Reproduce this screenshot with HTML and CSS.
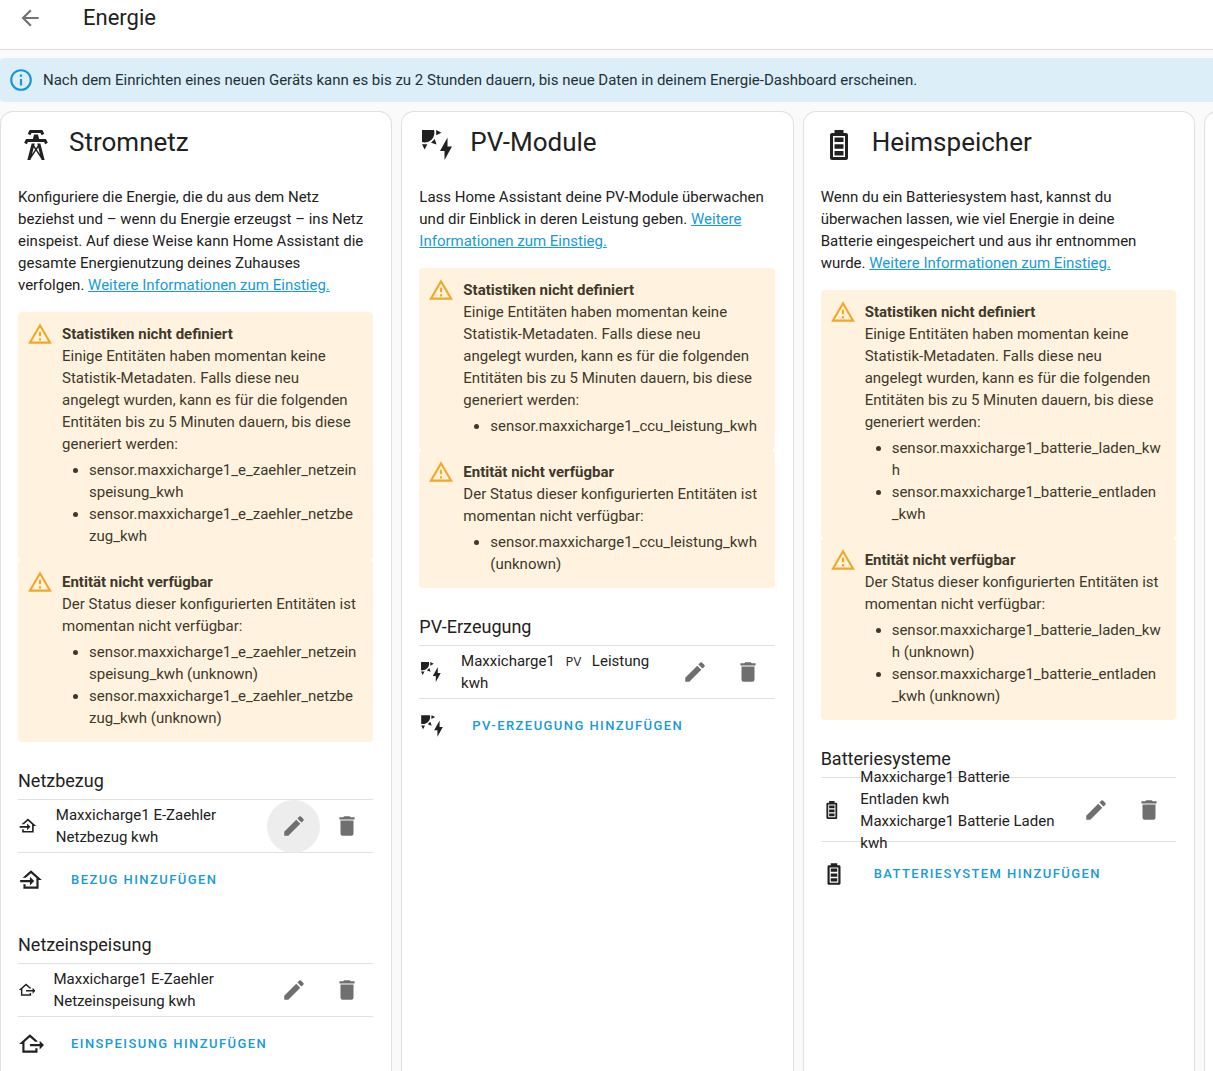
FILE: index.html
```html
<!DOCTYPE html>
<html lang="de">
<head>
<meta charset="utf-8">
<title>Energie</title>
<meta name="viewport" content="width=device-width, initial-scale=1">
<link rel="stylesheet" href="styles.css">
</head>
<body>
<svg class="sprite" aria-hidden="true">
  <symbol id="tower" viewBox="0 0 24 24"><path d="M8.28,5.45L6.5,4.55L7.76,2H16.23L17.5,4.55L15.72,5.44L15,4H9L8.28,5.45M18.62,8H14.09L13.3,5H10.7L9.91,8H5.38L4.1,10.55L5.89,11.44L6.62,10H17.38L18.1,11.45L19.89,10.56L18.62,8M17.77,22H15.7L15.46,21.1L12,15.9L8.53,21.1L8.3,22H6.23L9.12,11H11.19L10.83,12.35L12,14.1L13.16,12.35L12.81,11H14.88L17.77,22M11.4,15L10.5,13.65L9.32,18.13L11.4,15M14.68,18.12L13.5,13.64L12.6,15L14.68,18.12Z"/></symbol>
  <symbol id="solar" viewBox="0 0 24 24"><path d="M11.45,2V5.55L15,3.77L11.45,2M10.45,8L8,10.46L11.75,11.71L10.45,8M2,11.45L3.77,15L5.55,11.45H2M10,2H2V10C2.57,10.17 3.17,10.25 3.77,10.25C7.35,10.26 10.26,7.35 10.27,3.75C10.26,3.16 10.17,2.57 10,2M17,22V16H14L19,7V13H22L17,22Z"/></symbol>
  <symbol id="battery" viewBox="0 0 24 24"><path d="M16,20H8V6H16M16.67,4H15V2H9V4H7.33A1.33,1.33 0 0,0 6,5.33V20.67C6,21.4 6.6,22 7.33,22H16.67A1.33,1.33 0 0,0 18,20.67V5.33C18,4.6 17.4,4 16.67,4M15,16H9V19H15V16M15,7H9V10H15V7M15,11.5H9V14.5H15V11.5Z"/></symbol>
  <symbol id="import" viewBox="0 0 24 24"><path d="M15 13L11 17V14H2V12H11V9L15 13M5 20V16H7V18H17V10.19L12 5.69L7.21 10H4.22L12 3L22 12H19V20H5Z"/></symbol>
  <symbol id="export" viewBox="0 0 24 24"><path d="M24 13L20 17V14H11V12H20V9L24 13M4 20V12H1L11 3L18 9.3V10H15.79L11 5.69L6 10.19V18H16V16H18V20H4Z"/></symbol>
  <symbol id="pencil" viewBox="0 0 24 24"><path d="M20.71,7.04C21.1,6.65 21.1,6 20.71,5.63L18.37,3.29C18,2.9 17.35,2.9 16.96,3.29L15.12,5.12L18.87,8.87M3,17.25V21H6.75L17.81,9.93L14.06,6.18L3,17.25Z"/></symbol>
  <symbol id="trash" viewBox="0 0 24 24"><path d="M19,4H15.5L14.5,3H9.5L8.5,4H5V6H19M6,19A2,2 0 0,0 8,21H16A2,2 0 0,0 18,19V7H6V19Z"/></symbol>
  <symbol id="back" viewBox="0 0 24 24"><path d="M20,11V13H8L13.5,18.5L12.08,19.92L4.16,12L12.08,4.08L13.5,5.5L8,11H20Z"/></symbol>
  <symbol id="warning" viewBox="0 0 24 24"><path d="M12,2L1,21H23M12,6L19.53,19H4.47M11,10V14H13V10M11,16V18H13V16"/></symbol>
  <symbol id="info" viewBox="0 0 24 24"><path d="M11,9H13V7H11M12,20C7.59,20 4,16.41 4,12C4,7.59 7.59,4 12,4C16.41,4 20,7.59 20,12C20,16.41 16.41,20 12,20M12,2A10,10 0 0,0 2,12A10,10 0 0,0 12,22A10,10 0 0,0 22,12A10,10 0 0,0 12,2M11,17H13V11H11V17Z"/></symbol>
</svg>

<header class="toolbar">
  <button class="back" type="button" aria-label="Zurück"><svg class="icon"><use href="#back"/></svg></button>
  <h1 class="toolbar-title">Energie</h1>
</header>

<div class="notice" role="status">
  <svg class="icon"><use href="#info"/></svg>
  <span>Nach dem Einrichten eines neuen Geräts kann es bis zu 2 Stunden dauern, bis neue Daten in deinem Energie-Dashboard erscheinen.</span>
</div>

<main class="cards">
  <section class="card">
    <h2 class="card-title"><svg class="icon-large"><use href="#tower"/></svg>Stromnetz</h2>
    <p class="intro">Konfiguriere die Energie, die du aus dem Netz beziehst und – wenn du Energie erzeugst – ins Netz einspeist. Auf diese Weise kann Home Assistant die gesamte Energienutzung deines Zuhauses verfolgen. <a href="#">Weitere Informationen zum Einstieg.</a></p>
    <div class="alert" role="alert">
      <svg class="icon"><use href="#warning"/></svg>
      <div class="alert-body">
        <strong class="alert-title">Statistiken nicht definiert</strong>
        Einige Entitäten haben momentan keine Statistik-Metadaten. Falls diese neu angelegt wurden, kann es für die folgenden Entitäten bis zu 5 Minuten dauern, bis diese generiert werden:
        <ul><li>sensor.maxxicharge1_e_zaehler_netzeinspeisung_kwh</li><li>sensor.maxxicharge1_e_zaehler_netzbezug_kwh</li></ul>
      </div>
    </div>
    <div class="alert" role="alert">
      <svg class="icon"><use href="#warning"/></svg>
      <div class="alert-body">
        <strong class="alert-title">Entität nicht verfügbar</strong>
        Der Status dieser konfigurierten Entitäten ist momentan nicht verfügbar:
        <ul><li>sensor.maxxicharge1_e_zaehler_netzeinspeisung_kwh (unknown)</li><li>sensor.maxxicharge1_e_zaehler_netzbezug_kwh (unknown)</li></ul>
      </div>
    </div>
    <h3 class="group-title">Netzbezug</h3>
    <div class="row">
      <svg class="icon"><use href="#import"/></svg>
      <span class="content">Maxxicharge1 E-Zaehler Netzbezug kwh</span>
      <button class="icon-button active" type="button" aria-label="Bearbeiten"><svg class="icon"><use href="#pencil"/></svg></button>
      <button class="icon-button" type="button" aria-label="Löschen"><svg class="icon"><use href="#trash"/></svg></button>
    </div>
    <div class="row add">
      <svg class="icon"><use href="#import"/></svg>
      <button class="text-button" type="button">Bezug hinzufügen</button>
    </div>
    <h3 class="group-title">Netzeinspeisung</h3>
    <div class="row">
      <svg class="icon"><use href="#export"/></svg>
      <span class="content">Maxxicharge1 E-Zaehler Netzeinspeisung kwh</span>
      <button class="icon-button" type="button" aria-label="Bearbeiten"><svg class="icon"><use href="#pencil"/></svg></button>
      <button class="icon-button" type="button" aria-label="Löschen"><svg class="icon"><use href="#trash"/></svg></button>
    </div>
    <div class="row add">
      <svg class="icon"><use href="#export"/></svg>
      <button class="text-button" type="button">Einspeisung hinzufügen</button>
    </div>
  </section>

  <section class="card">
    <h2 class="card-title"><svg class="icon-large"><use href="#solar"/></svg>PV-Module</h2>
    <p class="intro">Lass Home Assistant deine PV-Module überwachen und dir Einblick in deren Leistung geben. <a href="#">Weitere Informationen zum Einstieg.</a></p>
    <div class="alert" role="alert">
      <svg class="icon"><use href="#warning"/></svg>
      <div class="alert-body">
        <strong class="alert-title">Statistiken nicht definiert</strong>
        Einige Entitäten haben momentan keine Statistik-Metadaten. Falls diese neu angelegt wurden, kann es für die folgenden Entitäten bis zu 5 Minuten dauern, bis diese generiert werden:
        <ul><li>sensor.maxxicharge1_ccu_leistung_kwh</li></ul>
      </div>
    </div>
    <div class="alert" role="alert">
      <svg class="icon"><use href="#warning"/></svg>
      <div class="alert-body">
        <strong class="alert-title">Entität nicht verfügbar</strong>
        Der Status dieser konfigurierten Entitäten ist momentan nicht verfügbar:
        <ul><li>sensor.maxxicharge1_ccu_leistung_kwh (unknown)</li></ul>
      </div>
    </div>
    <h3 class="group-title">PV-Erzeugung</h3>
    <div class="row">
      <svg class="icon"><use href="#solar"/></svg>
      <span class="content">Maxxicharge1 <span class="tag">PV</span> Leistung kwh</span>
      <button class="icon-button" type="button" aria-label="Bearbeiten"><svg class="icon"><use href="#pencil"/></svg></button>
      <button class="icon-button" type="button" aria-label="Löschen"><svg class="icon"><use href="#trash"/></svg></button>
    </div>
    <div class="row add">
      <svg class="icon"><use href="#solar"/></svg>
      <button class="text-button" type="button">PV-Erzeugung hinzufügen</button>
    </div>
  </section>

  <section class="card">
    <h2 class="card-title"><svg class="icon-large"><use href="#battery"/></svg>Heimspeicher</h2>
    <p class="intro">Wenn du ein Batteriesystem hast, kannst du überwachen lassen, wie viel Energie in deine Batterie eingespeichert und aus ihr entnommen wurde. <a href="#">Weitere Informationen zum Einstieg.</a></p>
    <div class="alert" role="alert">
      <svg class="icon"><use href="#warning"/></svg>
      <div class="alert-body">
        <strong class="alert-title">Statistiken nicht definiert</strong>
        Einige Entitäten haben momentan keine Statistik-Metadaten. Falls diese neu angelegt wurden, kann es für die folgenden Entitäten bis zu 5 Minuten dauern, bis diese generiert werden:
        <ul><li>sensor.maxxicharge1_batterie_laden_kwh</li><li>sensor.maxxicharge1_batterie_entladen_kwh</li></ul>
      </div>
    </div>
    <div class="alert" role="alert">
      <svg class="icon"><use href="#warning"/></svg>
      <div class="alert-body">
        <strong class="alert-title">Entität nicht verfügbar</strong>
        Der Status dieser konfigurierten Entitäten ist momentan nicht verfügbar:
        <ul><li>sensor.maxxicharge1_batterie_laden_kwh (unknown)</li><li>sensor.maxxicharge1_batterie_entladen_kwh (unknown)</li></ul>
      </div>
    </div>
    <h3 class="group-title">Batteriesysteme</h3>
    <div class="row double">
      <svg class="icon"><use href="#battery"/></svg>
      <div class="content"><div>Maxxicharge1 Batterie Entladen kwh</div><div>Maxxicharge1 Batterie Laden kwh</div></div>
      <button class="icon-button" type="button" aria-label="Bearbeiten"><svg class="icon"><use href="#pencil"/></svg></button>
      <button class="icon-button" type="button" aria-label="Löschen"><svg class="icon"><use href="#trash"/></svg></button>
    </div>
    <div class="row double add">
      <svg class="icon"><use href="#battery"/></svg>
      <button class="text-button" type="button">Batteriesystem hinzufügen</button>
    </div>
  </section>

  <section class="card"></section>
</main>
</body>
</html>
```
FILE: styles.css
```css
* { box-sizing: border-box; }

html, body { height: 100%; }

body {
  margin: 0;
  display: flex;
  flex-direction: column;
  overflow: hidden;
  background: #fafafa;
  color: #212121;
  font: 400 15px/22px Roboto, sans-serif;
}

h1, h2, h3, p, ul { margin: 0; }

button {
  border: 0;
  padding: 0;
  background: none;
  font: inherit;
  color: inherit;
  cursor: pointer;
}

a { color: #189bd6; }

svg { fill: currentColor; }

.sprite { display: none; }

.icon { width: 26px; height: 26px; }

.icon-large { width: 36px; height: 36px; }

.toolbar {
  flex: none;
  display: flex;
  align-items: flex-start;
  height: 50px;
  padding: 4px 17px;
  gap: 40px;
  background: #fff;
  border-bottom: 1px solid #dcdcdc;
}

.back { display: flex; padding-top: 1px; color: #727272; }

.toolbar-title { font-size: 22px; line-height: 28px; font-weight: 400; }

.notice {
  flex: none;
  display: flex;
  align-items: center;
  gap: 9px;
  margin: 8px 0 9px;
  padding: 9px 8px;
  border-radius: 4px 0 0 4px;
  background: #dceef7;
  color: #1f3038;
}

.notice .icon { flex: none; color: #1496d8; }

.cards {
  flex: 1 0 auto;
  display: grid;
  grid-auto-flow: column;
  grid-auto-columns: calc((100% - 36px) / 3);
  gap: 9px;
}

.card {
  padding: 15px 18px 0 17px;
  border: 1px solid #e0e0e0;
  border-bottom: 0;
  border-radius: 13px 13px 0 0;
  background: #fff;
}

.card-title {
  display: flex;
  align-items: flex-start;
  gap: 15px;
  margin-bottom: 23px;
  font-size: 26px;
  line-height: 30px;
  font-weight: 400;
}

.intro { margin-bottom: 16px; padding-right: 6px; }

.alert {
  display: flex;
  gap: 9px;
  padding: 9px 15px 9px 9px;
  border-radius: 4px;
  background: #fff3df;
  color: #40382a;
}

.alert .icon { flex: none; color: #f0a82a; }

.alert-body { padding-top: 2px; min-width: 0; overflow-wrap: anywhere; }

.alert-title { display: block; font-weight: 700; }

.alert ul { padding-left: 27px; margin: 4px 0; }

.group-title {
  margin-top: 28px;
  padding-bottom: 7px;
  border-bottom: 1px solid #e0e0e0;
  font-size: 18px;
  line-height: 22px;
  font-weight: 400;
}

.row {
  display: flex;
  align-items: center;
  height: 53px;
  border-bottom: 1px solid #e0e0e0;
}

.row > .icon { margin-right: 18px; }

.row.double { height: 64px; }

.row.add { border: 0; }

.content { flex: 1 1 auto; padding-right: 8px; }

.tag {
  margin: 0 7px;
  font-family: "Open Sans", sans-serif;
  font-size: 13px;
  line-height: 1;
}

.icon-button {
  flex: none;
  display: flex;
  align-items: center;
  justify-content: center;
  width: 53px;
  height: 53px;
  border-radius: 50%;
  color: #6f6f6f;
}

.icon-button.active { background: #ededed; }

.text-button {
  padding: 9px;
  color: #189bd6;
  font-size: 13px;
  font-weight: 500;
  letter-spacing: 0.11em;
  text-transform: uppercase;
}
```
